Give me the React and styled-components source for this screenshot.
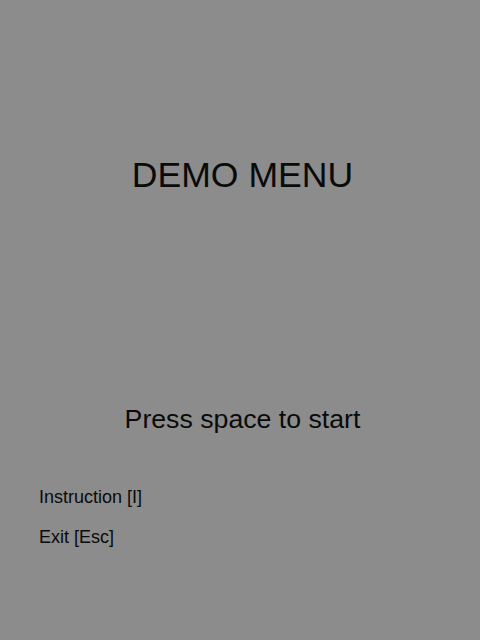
import React from 'react';
import styled, { createGlobalStyle } from 'styled-components';

const GlobalStyle = createGlobalStyle`
  html, body {
    margin: 0;
    padding: 0;
    background: #8c8c8c;
  }
`;

const Screen = styled.div`
  width: 480px;
  height: 640px;
  box-sizing: border-box;
  background: #8c8c8c;
  color: #0a0a0a;
  font-family: 'Liberation Sans', Arial, sans-serif;
  display: flex;
  flex-direction: column;
  padding-top: 155px;
  overflow: hidden;
`;

const Centered = styled.div`
  padding-left: 5px;
  text-align: center;
`;

const Title = styled.h1`
  margin: 0;
  font-size: 35.6px;
  font-weight: normal;
  line-height: normal;
`;

const Prompt = styled.p`
  margin: 208px 0 0;
  font-size: 26.7px;
  line-height: normal;
`;

const Options = styled.ul`
  list-style: none;
  margin: 52px 0 0;
  padding: 0 0 0 39px;
  display: flex;
  flex-direction: column;
  gap: 19px;
`;

const Option = styled.li`
  font-size: 18px;
  line-height: normal;
`;

export default function App() {
  return (
    <>
      <GlobalStyle />
      <Screen>
        <Centered>
          <Title>DEMO MENU</Title>
          <Prompt>Press space to start</Prompt>
        </Centered>
        <Options>
          <Option>Instruction [I]</Option>
          <Option>Exit [Esc]</Option>
        </Options>
      </Screen>
    </>
  );
}
